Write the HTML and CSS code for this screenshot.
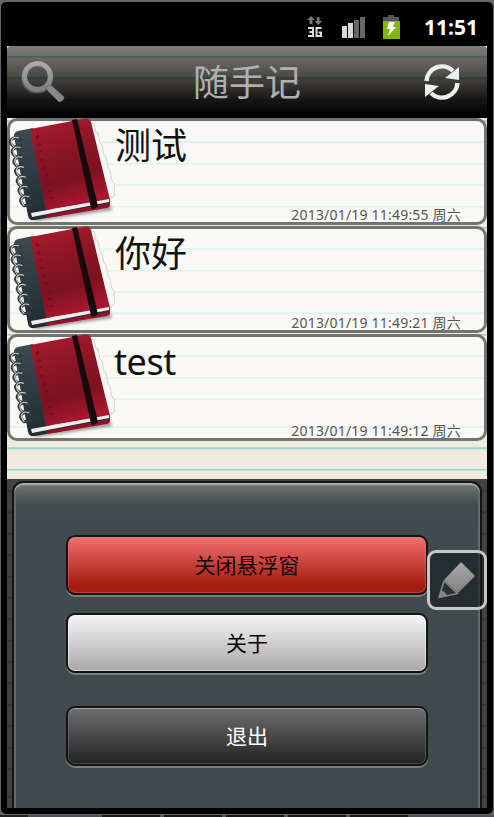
FILE: index.html
```html
<!DOCTYPE html>
<html lang="zh-CN">
<head>
<meta charset="utf-8">
<title>随手记</title>
<link rel="stylesheet" href="styles.css">
</head>
<body>
<svg class="defs" width="0" height="0" aria-hidden="true">
  <defs>
    <linearGradient id="cover" x1="0" y1="0" x2="0.3" y2="1">
      <stop offset="0" stop-color="#b01c30"/><stop offset=".45" stop-color="#8a1524"/><stop offset=".75" stop-color="#7c1321"/><stop offset="1" stop-color="#a6162d"/>
    </linearGradient>
    <linearGradient id="spine" x1="0" y1="0" x2="0" y2="1">
      <stop offset="0" stop-color="#3c4a53"/><stop offset="1" stop-color="#202b32"/>
    </linearGradient>
    <linearGradient id="metal" x1="0" y1="0" x2="0" y2="1">
      <stop offset="0" stop-color="#aaa"/><stop offset="1" stop-color="#808080"/>
    </linearGradient>
    <filter id="soft" x="-20%" y="-20%" width="140%" height="140%"><feGaussianBlur stdDeviation="1.5"/></filter>
    <symbol id="notebook" viewBox="0 0 106 106">
      <path d="M22 100L102 88 103 92 28 103Z" fill="#555" opacity=".6" filter="url(#soft)"/>
      <path d="M80 6l5-1 2 9 2 1 2 10 2 2 2 10 2 2 2 11 2 2 2 11 2 2 1 12-5 5Z" fill="#f7f7f5" stroke="#c9c9c6" stroke-width=".8"/>
      <path d="M5 18Q5 14 9 13L24 10 42 92 101 82V86Q101 89 98 89L26 102Q20 103 19 98Z" fill="url(#spine)"/>
      <path d="M21 11L74 1Q80-1 82 4L101 82 37 92Z" fill="url(#cover)"/>
      <path d="M22 95L100 81V84L23 99Z" fill="#eee"/>
      <path d="M37 97L101 85Q102 89 98 90L38 100Z" fill="#951229"/>
      <path d="M63 2L68 1 89 88Q86 92 82 90Z" fill="#17090d"/>
      <g fill="none" stroke="#343b3f" stroke-width="3">
        <path id="ring" d="M13 23Q7 18 3 21T5 29L13 28"/>
        <use href="#ring" x="1.7" y="9.8"/><use href="#ring" x="3.4" y="19.6"/><use href="#ring" x="5.1" y="29.4"/><use href="#ring" x="6.8" y="39.2"/><use href="#ring" x="8.5" y="49"/><use href="#ring" x="10.2" y="58.8"/>
      </g>
      <g fill="none" stroke="#c9cccd" stroke-width="1.1">
        <path id="shine" d="M10 20Q5 18 3 21T5 29"/>
        <use href="#shine" x="1.7" y="9.8"/><use href="#shine" x="3.4" y="19.6"/><use href="#shine" x="5.1" y="29.4"/><use href="#shine" x="6.8" y="39.2"/><use href="#shine" x="8.5" y="49"/><use href="#shine" x="10.2" y="58.8"/>
      </g>
      <text class="brand" transform="translate(26 18) rotate(77)" textLength="66">MOLESKINE</text>
    </symbol>
  </defs>
</svg>
<div class="device">
  <div class="status">
    <svg class="net" width="18" height="24" viewBox="0 0 18 24">
      <path d="M5 3L9 7H6.500V11H3.500V7H1ZM12 12L8.500 8H11V4H13.500V8H16.500Z" fill="#777"/>
      <path d="M2 15H7V23H2M3.500 19H7M15.500 15H10.500V23H15V19.500H12.500" fill="none" stroke="#ddd" stroke-width="2"/>
    </svg>
    <svg class="signal" width="24" height="22" viewBox="0 0 24 22">
      <path d="M0 9H5V21H0ZM6 6H11V21H6Z" fill="#d8d8d8"/><path d="M12 3H17V21H12ZM18 0H23V21H18Z" fill="#666"/>
    </svg>
    <svg class="battery" width="18" height="24" viewBox="0 0 18 24">
      <path d="M6 0H12V2H17V7H1V2H6Z" fill="#555"/><path d="M1 6H18V24H1Z" fill="#83b800"/><path d="M7 7H13L11 12H14L6 21 8 14H5Z" fill="#fff"/>
    </svg>
    <span class="clock">11:51</span>
  </div>
  <main class="screen">
    <header class="bar">
      <svg width="44" height="44" viewBox="0 0 44 44">
        <circle cx="16" cy="17" r="13.500" fill="none" stroke="#555" stroke-width="6"/>
        <circle cx="16.500" cy="16.500" r="13" fill="none" stroke="url(#metal)" stroke-width="5"/>
        <path d="M25 28L28 25 31 26 43 37Q43 41 38 42L27 31Z" fill="#888" stroke="#666" stroke-width=".6"/>
      </svg>
      <h1>随手记</h1>
      <svg class="sync" width="38" height="38" viewBox="0 0 38 38">
        <path d="M3.500 18A15.500 15.500 0 0 1 30 8" fill="none" stroke="#eee" stroke-width="4.500"/>
        <path d="M36 4V17L22 15Z" fill="#eee"/>
        <path d="M34.500 20A15.500 15.500 0 0 1 8 30" fill="none" stroke="#eee" stroke-width="4.500"/>
        <path d="M2 34V21L16 23Z" fill="#eee"/>
      </svg>
    </header>
    <section class="notes">
      <article class="note"><svg class="book"><use href="#notebook"/></svg><div class="body"><h2>测试</h2><time>2013/01/19 11:49:55 周六</time></div></article>
      <article class="note"><svg class="book"><use href="#notebook"/></svg><div class="body"><h2>你好</h2><time>2013/01/19 11:49:21 周六</time></div></article>
      <article class="note"><svg class="book"><use href="#notebook"/></svg><div class="body"><h2 class="latin">test</h2><time>2013/01/19 11:49:12 周六</time></div></article>
    </section>
    <section class="sheet">
      <div class="panel">
        <button class="btn red">关闭悬浮窗</button>
        <button class="btn light">关于</button>
        <button class="btn dark">退出</button>
      </div>
    </section>
    <button class="float" aria-label="edit">
      <svg width="54" height="54" viewBox="0 0 54 54">
        <path d="M31 9L45 23 28 40 14 27Z" fill="url(#metal)"/>
        <path d="M14 28L9 44.500 27.500 40.500Z" fill="#293032" stroke="#858585" stroke-width="1.600" stroke-linejoin="round"/>
        <path d="M9 45L11.500 37.500Q15.500 38.500 17 43Z" fill="#858585"/>
      </svg>
    </button>
  </main>
</div>
<div class="desktop"></div>
</body>
</html>
```
FILE: styles.css
```css
* { box-sizing: border-box; }
body {
  margin: 0;
  height: 817px;
  overflow: hidden;
  background: #666;
  font-family: "Noto Sans", "Noto Sans CJK SC", sans-serif;
  display: flex;
  flex-direction: column;
}
.defs { position: absolute; }
h1, h2 { margin: 0; font-weight: 400; }
.device {
  margin: 2px 1px 0 1px;
  height: 812px;
  padding: 0 6px 6px;
  background: #000;
  border-radius: 5px;
  flex: none;
}
.desktop {
  margin-top: 1px;
  height: 2px;
  background: linear-gradient(90deg, #222 0 28px, #46515c 28px 102px, #1c1818 102px 160px, #555 160px 164px, #1c1818 164px 222px, #555 222px 226px, #1c1818 226px 284px, #555 284px 288px, #1c1818 288px 346px, #555 346px 350px, #1c1818 350px 408px, #46515c 408px);
}
.status { height: 44px; display: flex; align-items: flex-start; justify-content: flex-end; padding-right: 9px; }
.net { margin: 11px 18px 0 0; }
.signal { margin: 15px 16px 0 0; }
.battery { margin: 13px 24px 0 0; }
.clock { color: #fff; font-size: 21px; font-weight: 700; line-height: 28px; margin-top: 11px; }
.screen {
  position: relative;
  width: 480px;
  height: 762px;
  overflow: hidden;
  background:
    linear-gradient(transparent 350px, #f2ebdf 350px) 0 10px / 100% 370px,
    repeating-linear-gradient(#a5ddd6 0, #92d6cf 1px, #cfe3da 2px, #f2ebdf 2.5px, #f2ebdf 21.375px) 0 10px / 100% 370px;
}
.bar {
  height: 72px;
  padding: 0 26px 0 14px;
  display: flex;
  align-items: center;
  justify-content: space-between;
  border-radius: 4px 4px 0 0;
  background: linear-gradient(rgba(0,0,0,.47), rgba(0,0,0,.68) 40%, rgba(0,0,0,.88) 70%, #000 96%);
}
.bar h1 { font-size: 36px; line-height: 52px; font-weight: 400; color: #b0b0b0; margin: 2px 0 0 6px; }
.notes { display: flex; flex-direction: column; gap: 1px; height: 361px; }
.note {
  flex: none;
  display: flex;
  height: 107px;
  border: 3px solid #72746f;
  border-radius: 10px;
  background: rgba(255,255,255,.7);
}
.book { width: 106px; height: 106px; margin: -3px 0 0 -1px; flex: none; overflow: visible; }
.brand { font: 5px "Liberation Mono", monospace; fill: #4e0d18; }
.body { flex: 1; display: flex; flex-direction: column; justify-content: space-between; }
.note h2 { font-size: 36px; line-height: 48px; color: #111; padding-top: 1px; }
.note h2.latin { letter-spacing: -.4px; margin-left: -1px; }
.note time { align-self: flex-end; margin-right: 23px; font-size: 14px; line-height: 14px; letter-spacing: .2px; color: #555; }
.sheet { height: 329px; padding: 2px 5px 0; background: rgba(0,0,0,.72); }
.panel {
  height: 340px;
  padding: 52px 52px 0;
  display: flex;
  flex-direction: column;
  border: 2px solid #141615;
  border-radius: 11px 11px 0 0;
  background: linear-gradient(#747877, #414a4d 22px, #40494c);
  box-shadow: inset 0 2px 1px #aaaead, inset 2px 0 #5f686b, inset -2px 0 #5f686b;
}
.btn {
  height: 60px;
  flex: none;
  border: 2px solid #111516;
  border-radius: 9px;
  padding: 0 0 3px;
  font: 21px "Noto Sans", "Noto Sans CJK SC", sans-serif;
}
.red { color: #100; background: linear-gradient(#f27070, #a51c10 85%); box-shadow: inset 0 0 0 1px #ff807855, 0 2px #76807f; }
.light { margin-top: 18px; color: #000; background: linear-gradient(#f6f6f6, #aaa7a7); box-shadow: inset 0 0 0 1px #ffffff88, 0 2px #76807f; }
.dark { margin-top: 33px; color: #fff; background: linear-gradient(#6e6e6e, #222); box-shadow: inset 0 1px #aaa, inset 0 0 0 1px #77777777, 0 2px #76807f; }
.float {
  position: absolute;
  right: 0;
  top: 504px;
  width: 60px;
  height: 60px;
  padding: 0;
  border: 3px solid #c5c8c8;
  border-radius: 9px;
  background: rgba(20,27,29,.62);
}
.float svg { display: block; }
```
